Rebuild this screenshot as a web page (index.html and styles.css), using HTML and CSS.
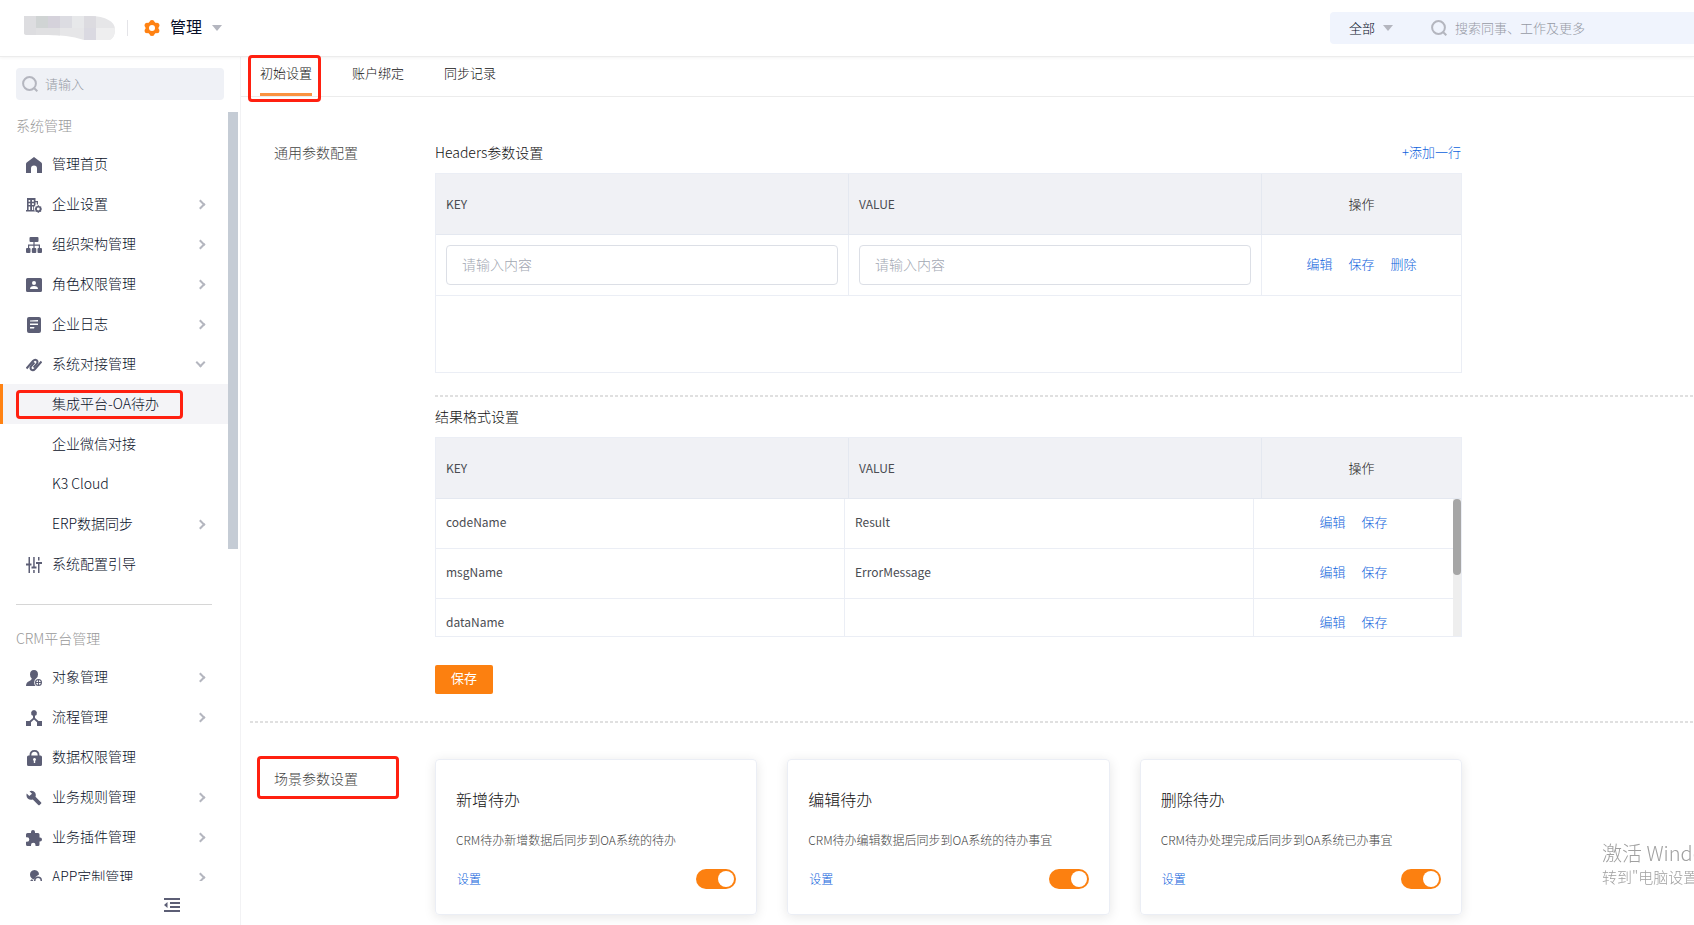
FILE: index.html
```html
<!DOCTYPE html>
<html lang="zh-CN">
<head>
  <meta charset="UTF-8">
  <title>管理 - 集成平台-OA待办</title>
  <link rel="stylesheet" href="styles.css">
</head>
<body>

  <header class="header">
    <svg class="logo" width="92" height="24" viewBox="0 0 92 24">
      <defs>
        <clipPath id="logoShape"><path d="M0 0H66C82 0 91 6 91 13C91 19 89 24 84 24H60C48 20 36 19 24 19H4Q0 19 0 17Z"/></clipPath>
      </defs>
      <g clip-path="url(#logoShape)">
        <rect width="92" height="24" fill="#e6e6e8"/>
        <rect width="12" height="24" fill="#dddde0"/>
        <rect x="12" width="12" height="12" fill="#d0d4d4"/>
        <rect x="24" width="12" height="12" fill="#d5d2db"/>
        <rect x="36" width="12" height="12" fill="#dcdce2"/>
        <rect x="12" y="12" width="24" height="12" fill="#e0e0e2"/>
        <rect x="48" width="12" height="12" fill="#e7e8ea"/>
        <rect x="60" width="12" height="12" fill="#dcdbe0"/>
        <rect x="60" y="12" width="12" height="12" fill="#dad9e1"/>
        <rect x="72" y="12" width="20" height="12" fill="#eeeeef"/>
      </g>
    </svg>
    <button type="button" class="app-switch">
      <svg width="16" height="16" viewBox="0 0 16 16" fill="#ff8213">
        <circle cx="8" cy="8" r="6.500"/>
        <circle cx="8" cy="2.600" r="2.500"/>
        <circle cx="12.900" cy="5.300" r="2.500"/>
        <circle cx="12.900" cy="10.700" r="2.500"/>
        <circle cx="8" cy="13.400" r="2.500"/>
        <circle cx="3.100" cy="10.700" r="2.500"/>
        <circle cx="3.100" cy="5.300" r="2.500"/>
        <circle cx="8" cy="8" r="3" fill="#fff"/>
      </svg>
      <span>管理</span>
      <i class="caret"></i>
    </button>
    <div class="global-search">
      <div class="scope">
        <select aria-label="搜索范围">
          <option>全部</option>
        </select>
        <i class="caret"></i>
      </div>
      <svg width="16" height="16" viewBox="0 0 16 16" fill="none" stroke="#b4b6bf" stroke-width="2"><circle cx="7.5" cy="7.5" r="6.4"/><path d="M12 12l3.3 3.3"/></svg>
      <input type="text" placeholder="搜索同事、工作及更多" aria-label="搜索">
    </div>
  </header>

  <div class="layout">
    <aside class="sidebar">
      <div class="side-search">
        <svg width="16" height="16" viewBox="0 0 16 16" fill="none" stroke="#b4b6bf" stroke-width="2"><circle cx="7.5" cy="7.5" r="6.4"/><path d="M12 12l3.3 3.3"/></svg>
        <input type="text" placeholder="请输入" aria-label="菜单搜索">
      </div>

      <nav class="menu">
        <h3>系统管理</h3>
        <ul>
          <li><a href="#">
            <svg class="icon" viewBox="0 0 16 16"><path d="M8 0L15 5.2Q16 6 16 7V16H11V11.5A3 3 0 0 0 5 11.5V16H0V7Q0 6 1 5.2Z"/></svg>
            <span>管理首页</span></a></li>
          <li><a href="#">
            <svg class="icon" viewBox="0 0 16 16"><path fill-rule="evenodd" d="M1 1H9.500V4H12V7.500H10.800V5.200H9.500V8L8 10V12.500L9 14.500H0V13H1ZM2.600 3V4.800H4.200V3ZM6 3V4.800H7.800V3ZM2.600 6.200V8H4.200V6.200ZM6 6.200V8H7.800V6.200ZM2.600 9.500V13H4.200V9.500ZM6 9.500V13H7.200V9.500Z"/><path fill-rule="evenodd" d="M12.300 8L13.500 9.200L15.200 9.400L15.300 11L16 12L15.300 13.100L15.100 14.700L13.500 14.900L12.300 16L11.100 14.900L9.500 14.700L9.300 13.100L8.600 12L9.300 11L9.500 9.400L11.100 9.200ZM12.300 10.600A1.400 1.400 0 1 0 12.300 13.400A1.400 1.400 0 1 0 12.300 10.600Z"/></svg>
            <span>企业设置</span><i class="arrow"></i></a></li>
          <li><a href="#">
            <svg class="icon" viewBox="0 0 16 16"><rect x="3.500" width="9" height="5" rx="1"/><path d="M7.400 5H8.600V7.500H14V11H12.800V8.700H8.600V11H7.400V8.700H3.200V11H2V7.500H7.400Z"/><rect y="11" width="4.500" height="5" rx="1"/><rect x="5.800" y="11" width="4.500" height="5" rx="1"/><rect x="11.500" y="11" width="4.500" height="5" rx="1"/></svg>
            <span>组织架构管理</span><i class="arrow"></i></a></li>
          <li><a href="#">
            <svg class="icon" viewBox="0 0 16 16"><path fill-rule="evenodd" d="M1.500 1H14.500Q16 1 16 2.500V13.500Q16 15 14.500 15H1.500Q0 15 0 13.500V2.500Q0 1 1.500 1ZM8 4A2 2 0 1 0 8 8A2 2 0 1 0 8 4ZM4 12H12Q12 9 8 9Q4 9 4 12Z"/></svg>
            <span>角色权限管理</span><i class="arrow"></i></a></li>
          <li><a href="#">
            <svg class="icon" viewBox="0 0 16 16"><path fill-rule="evenodd" d="M3 0H13Q15 0 15 2V14Q15 16 13 16H3Q1 16 1 14V2Q1 0 3 0ZM4 3.500L12 3V4.500H4ZM4 6.500H12V8H4ZM4 10H8.500L8 11.500H4Z"/></svg>
            <span>企业日志</span><i class="arrow"></i></a></li>
          <li><a href="#">
            <svg class="icon line" viewBox="0 0 16 16"><path d="M.500 11.500L7 4Q8.800 2 10.700 3.300Q12.300 5 10.700 7L7.600 10.500"/><path d="M15.500 4.500L9 12Q7.200 14 5.300 12.700Q3.700 11 5.300 9L8.400 5.500"/></svg>
            <span>系统对接管理</span><i class="arrow down"></i></a></li>
          <li><a href="#" class="sub active"><span>集成平台-OA待办</span><b class="mark mark-menu"></b></a></li>
          <li><a href="#" class="sub"><span>企业微信对接</span></a></li>
          <li><a href="#" class="sub"><span>K3 Cloud</span></a></li>
          <li><a href="#" class="sub"><span>ERP数据同步</span><i class="arrow"></i></a></li>
          <li><a href="#">
            <svg class="icon" viewBox="0 0 16 16"><path d="M2.500 0H4V6.500H5.500V8.500H4V16H2.500V8.500H0V6.500H2.500ZM7.200 0H8.700V9.500H10.500V11.500H5.500V9.500H7.200ZM7.200 13H8.700V16H7.200ZM12 0H13.500V3.500H12ZM10 5H16V7H13.500V16H12V7H10Z"/></svg>
            <span>系统配置引导</span></a></li>
        </ul>
        <hr>
        <h3>CRM平台管理</h3>
        <ul>
          <li><a href="#">
            <svg class="icon" viewBox="0 0 16 16"><path d="M8 0Q12 0 12 4.500Q12 7 10.300 8.300Q8.200 9.800 8.200 12.400Q8.200 14.500 9.500 16H0Q0 12.500 3 11.200Q5.800 10.300 5.800 8.500Q4 7 4 4.500Q4 0 8 0Z"/><path fill-rule="evenodd" d="M12.500 9A3.500 3.500 0 1 0 12.500 16A3.500 3.500 0 1 0 12.500 9ZM12 10.200V12H10.200Q10.500 10.500 12 10.200ZM13 10.200Q14.500 10.500 14.800 12H13ZM10.200 13H12V14.800Q10.500 14.500 10.200 13ZM13 13H14.800Q14.500 14.500 13 14.800Z"/></svg>
            <span>对象管理</span><i class="arrow"></i></a></li>
          <li><a href="#">
            <svg class="icon" viewBox="0 0 16 16"><path d="M8 0A3 3 0 0 1 9 5.800V8L12.500 11H16V16H11V12.200L8 9.500L5 12.200V16H0V11H3.500L7 8V5.800A3 3 0 0 1 8 0Z"/></svg>
            <span>流程管理</span><i class="arrow"></i></a></li>
          <li><a href="#">
            <svg class="icon" viewBox="0 0 16 16"><path fill-rule="evenodd" d="M3.500 5.500Q3.500 0 8.500 0Q13.500 0 13.500 5.500H14.500Q16 5.500 16 7V14.500Q16 16 14.500 16H2.500Q1 16 1 14.500V7Q1 5.500 2.500 5.500ZM5.300 5.500H11.700Q11.700 1.800 8.500 1.800Q5.300 1.800 5.300 5.500ZM8.500 8A1.500 1.500 0 0 0 7.800 10.800V13H9.200V10.800A1.500 1.500 0 0 0 8.500 8Z"/></svg>
            <span>数据权限管理</span></a></li>
          <li><a href="#">
            <svg class="icon" viewBox="0 0 16 16"><path d="M3.500 1.200Q7 0 9 2.500Q10.300 4.300 9.500 6.800L15.200 12.500Q15.500 13 15.200 13.400L13.400 15.200Q13 15.500 12.500 15.200L6.800 9.500Q4 10.300 2 8.800Q-.2 6.800 .7 3.500L3.300 6.100L6 3.800Z"/></svg>
            <span>业务规则管理</span><i class="arrow"></i></a></li>
          <li><a href="#">
            <svg class="icon" viewBox="0 0 16 16"><path d="M5 3V2A2 2 0 0 1 9 2V3H12Q13.500 3 13.500 4.500V7.500H14A2 2 0 0 1 14 11.500H13.500V14.500Q13.500 16 12 16H9.500V15A2 2 0 0 0 5 15V16H1.500Q0 16 0 14.500V11.800H1A2 2 0 0 0 1 7.200H0V4.500Q0 3 1.500 3Z"/></svg>
            <span>业务插件管理</span><i class="arrow"></i></a></li>
          <li><a href="#">
            <svg class="icon" viewBox="0 0 16 16"><path d="M8.500 0Q13 .5 13 4.500Q11 5.500 9.500 7L8 9.500Q4 8 4 4.500Q4 .5 8.500 0Z"/><path fill-rule="evenodd" d="M12 6.500A4 4 0 1 0 12 14.500A4 4 0 1 0 12 6.500ZM12 8A2.500 2.500 0 1 1 12 13A2.500 2.500 0 1 1 12 8Z"/><path d="M6 9L8 12L9 16H0Q0 12 4 11Z"/></svg>
            <span>APP定制管理</span><i class="arrow"></i></a></li>
        </ul>
      </nav>
      <i class="side-scroll"></i>

      <div class="side-foot">
        <button type="button" aria-label="收起菜单">
          <svg width="16" height="14" viewBox="0 0 16 14"><path fill="#5c5e75" d="M0 0H16V2H0ZM6 4H16V6H6ZM6 8H16V10H6ZM0 12H16V14H0ZM0 7L3.500 4V10Z"/></svg>
        </button>
      </div>
    </aside>

    <main class="main">
      <nav class="tabs">
        <a href="#" class="on">初始设置<b class="mark mark-tab"></b></a>
        <a href="#">账户绑定</a>
        <a href="#">同步记录</a>
      </nav>

      <section class="section">
        <div class="label">通用参数配置</div>
        <div class="body">
          <div class="panel title-row">
            <h4>Headers参数设置</h4>
            <a href="#" class="link">+添加一行</a>
          </div>
          <div class="panel grid">
            <table>
              <colgroup><col><col><col class="col-op"></colgroup>
              <thead>
                <tr><th>KEY</th><th>VALUE</th><th class="op">操作</th></tr>
              </thead>
              <tbody>
                <tr class="edit-row">
                  <td><input type="text" placeholder="请输入内容" aria-label="KEY"></td>
                  <td><input type="text" placeholder="请输入内容" aria-label="VALUE"></td>
                  <td class="op"><a href="#" class="link">编辑</a><a href="#" class="link">保存</a><a href="#" class="link">删除</a></td>
                </tr>
              </tbody>
            </table>
          </div>

          <div class="dash dash-inner"></div>

          <h4>结果格式设置</h4>
          <div class="panel grid">
            <table>
              <colgroup><col><col><col class="col-op"></colgroup>
              <thead>
                <tr><th>KEY</th><th>VALUE</th><th class="op">操作</th></tr>
              </thead>
            </table>
            <div class="grid-body">
              <table>
                <colgroup><col><col><col class="col-op"></colgroup>
                <tbody>
                  <tr><td>codeName</td><td>Result</td><td class="op"><a href="#" class="link">编辑</a><a href="#" class="link">保存</a></td></tr>
                  <tr><td>msgName</td><td>ErrorMessage</td><td class="op"><a href="#" class="link">编辑</a><a href="#" class="link">保存</a></td></tr>
                  <tr><td>dataName</td><td></td><td class="op"><a href="#" class="link">编辑</a><a href="#" class="link">保存</a></td></tr>
                </tbody>
              </table>
              <div class="track"><i class="thumb"></i></div>
            </div>
          </div>

          <button type="button" class="btn">保存</button>
        </div>
      </section>

      <div class="dash dash-section"></div>

      <section class="section scene">
        <div class="label">场景参数设置<b class="mark mark-label"></b></div>
        <div class="body">
          <div class="panel cards">
            <div class="card">
              <h5>新增待办</h5>
              <p>CRM待办新增数据后同步到OA系统的待办</p>
              <div class="card-foot">
                <a href="#" class="link">设置</a>
                <input type="checkbox" class="switch" aria-label="新增待办" checked>
              </div>
            </div>
            <div class="card">
              <h5>编辑待办</h5>
              <p>CRM待办编辑数据后同步到OA系统的待办事宜</p>
              <div class="card-foot">
                <a href="#" class="link">设置</a>
                <input type="checkbox" class="switch" aria-label="编辑待办" checked>
              </div>
            </div>
            <div class="card">
              <h5>删除待办</h5>
              <p>CRM待办处理完成后同步到OA系统已办事宜</p>
              <div class="card-foot">
                <a href="#" class="link">设置</a>
                <input type="checkbox" class="switch" aria-label="删除待办" checked>
              </div>
            </div>
          </div>
        </div>
      </section>
    </main>
  </div>

  <div class="watermark">
    <div class="big">激活 Windows</div>
    <div>转到"电脑设置"以激活 Windows。</div>
  </div>

</body>
</html>
```
FILE: styles.css
```css
* {
  box-sizing: border-box;
}

body {
  margin: 0;
  height: 100vh;
  display: flex;
  flex-direction: column;
  overflow: hidden;
  font-family: "Noto Sans CJK SC", sans-serif;
  font-size: 14px;
  font-weight: 300;
  line-height: 20px;
  color: #080f28;
  background: #fff;
}

h3, h4, h5, p, ul {
  margin: 0;
  padding: 0;
  font-weight: inherit;
}

ul {
  list-style: none;
}

a {
  color: inherit;
  text-decoration: none;
}

button, input, select {
  font-family: inherit;
  font-size: 13px;
  font-weight: inherit;
  color: inherit;
  border: none;
  background: none;
  padding: 0;
  margin: 0;
  outline: none;
}

button {
  cursor: pointer;
}

input::placeholder {
  color: #969aa5;
  opacity: 1;
}

.link {
  font-size: 13px;
  color: #0d62dc;
}

.caret {
  border: 5px solid transparent;
  border-top: 6px solid #b4b6bf;
  border-bottom: 0;
}

/* red frames drawn over the content */
.mark {
  position: absolute;
  border: 3px solid #ff2010;
  border-radius: 4px;
  pointer-events: none;
}

/* header */
.header {
  position: relative;
  z-index: 1;
  display: flex;
  align-items: center;
  height: 57px;
  padding-left: 24px;
  border-bottom: 1px solid #ececec;
  box-shadow: 0 1px 3px rgba(0,0,0,0.05);
}

.app-switch {
  display: flex;
  align-items: center;
  gap: 10px;
  height: 16px;
  margin-left: 11px;
  padding-left: 16px;
  border-left: 1px solid #e4e4e8;
  font-size: 16px;
  font-weight: 400;
}

.app-switch span {
  padding-bottom: 4px;
}

.global-search {
  display: flex;
  align-items: center;
  width: 364px;
  height: 32px;
  margin-left: auto;
  padding-left: 19px;
  background: #f0f4fd;
  border-radius: 4px 0 0 4px;
}

.scope {
  display: flex;
  align-items: center;
  gap: 7px;
  margin-right: 38px;
}

.scope select {
  appearance: none;
  padding-bottom: 2px;
}

.global-search input {
  flex: 1;
  margin-left: 8px;
  padding-bottom: 2px;
}

/* sidebar */
.layout {
  flex: 1;
  display: flex;
  min-height: 0;
}

.sidebar {
  position: relative;
  flex: none;
  display: flex;
  flex-direction: column;
  width: 241px;
  padding-top: 11px;
  border-right: 1px solid #f2f2f4;
}

.side-search {
  display: flex;
  align-items: center;
  gap: 7px;
  height: 32px;
  margin: 0 16px 12px;
  padding-left: 6px;
  background: #eff1f6;
  border-radius: 4px;
}

.side-search input {
  width: 150px;
  padding-bottom: 2px;
}

.menu {
  flex: 1;
  min-height: 0;
  margin-right: 12px;
  overflow: hidden;
}

.menu h3 {
  padding: 3px 16px 9px;
  font-size: 14px;
  color: #999;
}

.menu a {
  position: relative;
  display: flex;
  align-items: center;
  gap: 10px;
  height: 40px;
  padding: 0 24px 0 26px;
}

.menu a.sub {
  padding-left: 52px;
}

.menu span {
  padding-bottom: 2px;
}

.menu a.active {
  background: #f4f4f7;
  box-shadow: inset 3px 0 #ff8213;
}

.menu hr {
  height: 1px;
  margin: 20px 16px;
  border: none;
  background: #d6d6d6;
}

.icon {
  width: 16px;
  height: 16px;
  margin-top: 2px;
  fill: #5c5e75;
}

.icon.line {
  fill: none;
  stroke: #5c5e75;
  stroke-width: 2;
}

.arrow {
  width: 7px;
  height: 7px;
  margin-left: auto;
  border: solid #b4b6bf;
  border-width: 2px 2px 0 0;
  transform: rotate(45deg);
}

.arrow.down {
  transform: translateY(-2px) rotate(135deg);
}

.mark-menu {
  left: 16px;
  top: 6px;
  width: 167px;
  height: 29px;
}

.side-scroll {
  position: absolute;
  top: 55px;
  right: 2px;
  width: 10px;
  height: 437px;
  background: #c5ccd5;
}

.side-foot {
  height: 44px;
  padding: 17px 0 0 164px;
}

.side-foot button,
.side-foot svg {
  display: block;
}

/* tabs */
.main {
  flex: 1;
  min-width: 0;
}

.tabs {
  display: flex;
  gap: 40px;
  height: 40px;
  padding-left: 19px;
  border-bottom: 1px solid #ececec;
}

.tabs a {
  position: relative;
  padding-top: 6px;
  font-size: 13px;
  color: #111;
}

.tabs .on {
  border-bottom: 3px solid #fa9240;
}

.mark-tab {
  z-index: 2;
  left: -12px;
  top: -2px;
  width: 73px;
  height: 47px;
}

/* content */
.section {
  display: flex;
  padding: 45px 0 0 33px;
}

.label {
  position: relative;
  flex: none;
  width: 161px;
  color: #444;
}

.mark-label {
  left: -17px;
  top: -12px;
  width: 142px;
  height: 43px;
}

.body {
  flex: 1;
  min-width: 0;
  color: #111;
}

.body h4 {
  font-size: 14px;
}

.panel {
  max-width: 1027px;
}

.title-row {
  display: flex;
  justify-content: space-between;
  padding-right: 1px;
}

.grid {
  height: 200px;
  margin-top: 11px;
  border: 1px solid #ebeef5;
  overflow: hidden;
}

table {
  width: 100%;
  table-layout: fixed;
  border-collapse: separate;
  border-spacing: 0;
  font-size: 12px;
}

.col-op {
  width: 199px;
}

th, td {
  height: 50px;
  padding: 0 10px;
  border-right: 1px solid #ebeef5;
  border-bottom: 1px solid #ebeef5;
  text-align: left;
  font-weight: 400;
  color: #4a4c52;
}

td {
  padding-bottom: 3px;
}

th {
  height: 61px;
  background: #f0f1f5;
  border-color: #e4e8f0;
}

th.op, td.op {
  text-align: center;
  font-weight: 300;
  border-right: none;
}

th.op {
  font-size: 13px;
  color: #222;
}

.op .link + .link {
  margin-left: 16px;
}

.edit-row td {
  height: 61px;
}

.edit-row td:not(.op) {
  padding-bottom: 0;
}

.edit-row input {
  display: block;
  width: 100%;
  height: 40px;
  padding: 0 15px 2px;
  border: 1px solid #dcdfe6;
  border-radius: 4px;
  font-size: 14px;
  font-weight: 300;
}

.edit-row input::placeholder {
  color: #a2a7b2;
}

.grid-body {
  display: flex;
  align-items: flex-start;
  height: 137px;
  overflow: hidden;
}

.grid-body table {
  flex: 1;
}

.track {
  width: 8px;
  height: 100%;
  background: #eee;
}

.thumb {
  display: block;
  height: 76px;
  border-radius: 4px;
  background: #a6a6a6;
}

.dash {
  height: 2px;
  background: repeating-linear-gradient(90deg, #e0e0e0 0 3px, transparent 3px 5px);
}

.dash-inner {
  margin: 22px 0 9px;
}

.dash-section {
  margin: 27px 0 0 9px;
}

.btn {
  display: block;
  width: 58px;
  height: 29px;
  margin-top: 28px;
  padding-bottom: 4px;
  border-radius: 2px;
  background: #fc8010;
  color: #fff;
  font-weight: 400;
}

/* scene cards */
.scene {
  padding-top: 36px;
}

.scene .label {
  margin-top: 9px;
}

.cards {
  display: grid;
  grid-template-columns: repeat(3, 1fr);
  gap: 30px;
}

.card {
  height: 156px;
  padding: 27px 20px 0;
  border: 1px solid #ebeef5;
  border-radius: 4px;
  box-shadow: 0 2px 12px rgba(0,0,0,0.1);
}

.card h5 {
  font-size: 16px;
  line-height: 24px;
}

.card p {
  margin-top: 19px;
  font-size: 12px;
  color: #444;
  white-space: nowrap;
}

.card-foot {
  display: flex;
  align-items: center;
  justify-content: space-between;
  margin-top: 19px;
}

.card-foot .link {
  padding-left: 1px;
  font-size: 12px;
}

.switch {
  appearance: none;
  width: 40px;
  height: 20px;
  padding: 2px;
  border-radius: 10px;
  background: #dcdfe6;
  cursor: pointer;
}

.switch::before {
  content: "";
  display: block;
  width: 16px;
  height: 16px;
  border-radius: 50%;
  background: #fff;
}

.switch:checked {
  background: #fc8010;
}

.switch:checked::before {
  margin-left: 20px;
}

/* system notice in the corner of the screen */
.watermark {
  position: fixed;
  right: 0;
  bottom: 38px;
  width: 92px;
  overflow: hidden;
  white-space: nowrap;
  font-size: 15px;
  color: #a0a0a0;
  pointer-events: none;
}

.watermark .big {
  font-size: 20px;
  line-height: 28px;
}
```
